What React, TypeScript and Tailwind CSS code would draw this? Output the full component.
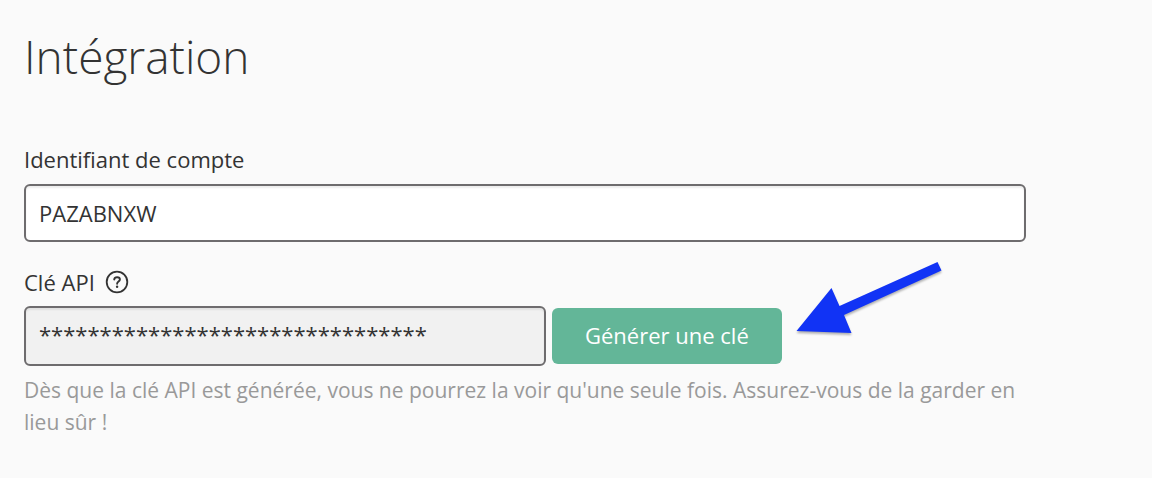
import clsx from "clsx";
import { InputHTMLAttributes } from "react";

const Field = ({
  className,
  ...props
}: InputHTMLAttributes<HTMLInputElement>) => (
  <input
    type="text"
    className={clsx(
      "min-w-0 rounded-md border-2 border-[#6e6c6e] px-[13px] text-[22px] text-[#333333] shadow-[inset_0_2px_2px_rgba(0,0,0,0.07)]",
      className
    )}
    {...props}
  />
);

const HelpIcon = () => (
  <svg viewBox="0 0 24 24" fill="none" className="h-6 w-6" aria-hidden="true">
    <circle cx="12" cy="12" r="10.3" stroke="#333333" strokeWidth="1.8" />
    <path
      d="M9.200 9.500c.2-1.500 1.300-2.300 2.900-2.300s2.800.9 2.800 2.300c0 2-2.800 2.200-2.800 4.300"
      stroke="#333333"
      strokeWidth="1.9"
      strokeLinecap="round"
    />
    <circle cx="12.1" cy="16.800" r="1.2" fill="#333333" />
  </svg>
);

const Arrow = () => (
  <svg
    viewBox="0 0 160 90"
    className="pointer-events-none absolute top-1/2 left-full ml-2 h-[90px] w-40 -translate-y-[78px] drop-shadow-[0_2px_1px_rgba(0,0,0,0.3)]"
    aria-hidden="true"
  >
    <path
      d="M6.500 73 L41.500 30 L49.500 48 L147.500 4 L151.500 12.500 L54 57 L61.500 75 Z"
      fill="#1133f5"
    />
  </svg>
);

const App = () => {
  return (
    <main className="min-h-screen bg-[#fafafa] px-6 pt-6 pb-10 font-['Open_Sans',sans-serif] text-[#333333]">
      <h1 className="text-[46px] leading-[64px] font-light">Intégration</h1>
      <form
        className="mt-[55px] max-w-[1002px]"
        onSubmit={(evt) => evt.preventDefault()}
      >
        <label htmlFor="account_id" className="block text-[22px] leading-8">
          Identifiant de compte
        </label>
        <Field
          id="account_id"
          defaultValue="PAZABNXW"
          className="mt-[9px] h-[58px] w-full bg-white"
        />
        <div className="mt-6 flex items-center gap-2.5 text-[22px] leading-8">
          <label htmlFor="api_key">Clé API</label>
          <button type="button" aria-label="Aide">
            <HelpIcon />
          </button>
        </div>
        <div className="mt-2 flex items-center gap-1.5">
          <Field
            id="api_key"
            readOnly
            value={"*".repeat(32)}
            className="h-[60px] w-[522px] bg-[#f1f1f1] pb-1"
          />
          <div className="relative shrink-0">
            <button
              type="submit"
              className="h-14 rounded-md bg-[#63b698] px-[33px] pb-0.5 text-[22px] text-white"
            >
              Générer une clé
            </button>
            <Arrow />
          </div>
        </div>
        <p className="mt-2 text-[21px] leading-8 text-[#999999]">
          Dès que la clé API est générée, vous ne pourrez la voir qu'une seule
          fois. Assurez-vous de la garder en lieu sûr !
        </p>
      </form>
    </main>
  );
};

export default App;
